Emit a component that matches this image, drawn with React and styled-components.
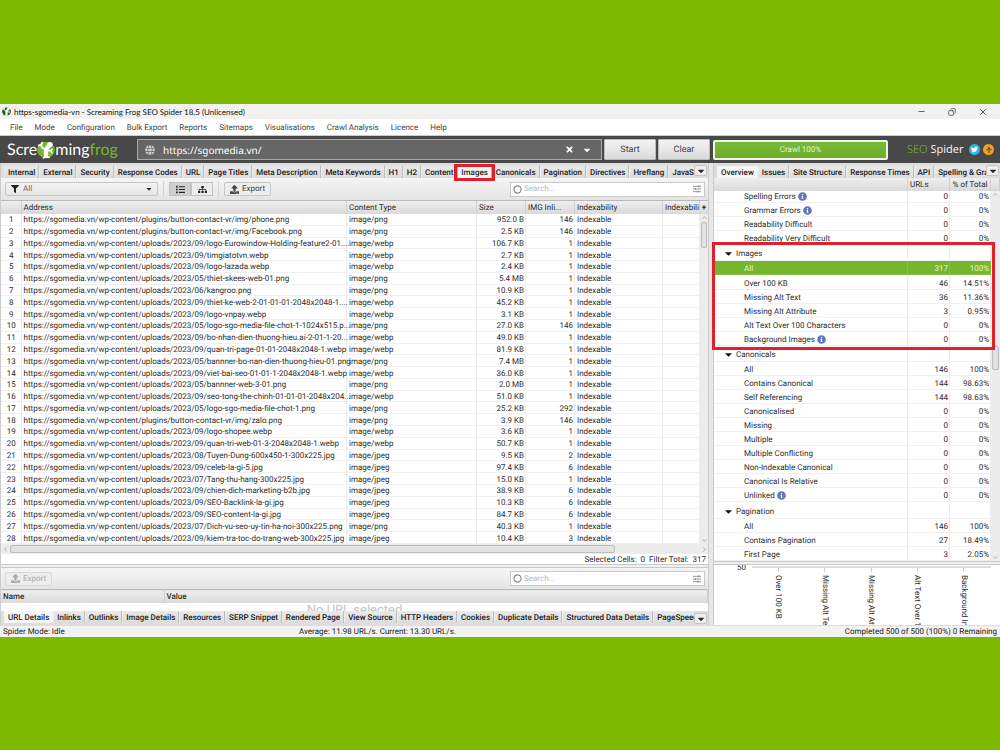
import React from 'react'
import styled, { createGlobalStyle, css } from 'styled-components'
import { FaFilter, FaList, FaSitemap, FaUpload, FaGlobe, FaTwitter, FaTimes, FaCaretDown, FaInfoCircle } from 'react-icons/fa'
import { Minus, Copy, X, ArrowUp, ChevronUp, ChevronDown, ChevronLeft, ChevronRight } from 'lucide-react'


const ui = `Roboto, "Liberation Sans", sans-serif`
const windowFont = `"Noto Sans", "Open Sans", sans-serif`

const GlobalStyle = createGlobalStyle`
	* { box-sizing: border-box; }

	body {
		margin: 0;
		background: #7db900;
		font-family: ${ui};
		font-size: 8px;
		line-height: 12px;
		text-rendering: geometricPrecision;
		color: #2c2c2c;
	}

	button, input, select {
		font: inherit;
		color: inherit;
		text-rendering: inherit;
		margin: 0;
		padding: 0;
		border: 0;
		background: none;
	}

	table {
		border-collapse: collapse;
		table-layout: fixed;
		width: 100%;
	}

	svg { display: block; flex: none; }
`

const Page = styled.div`
	display: flex;
	flex-direction: column;
	height: 100vh;
	min-height: 600px;
	padding: 104px 0 113px;
`

const Window = styled.main`
	flex: 1;
	min-height: 0;
	display: flex;
	flex-direction: column;
	background: #e6e6e6;
	overflow: hidden;
`

const TitleBar = styled.header`
	display: flex;
	align-items: center;
	gap: 3px;
	height: 15px;
	padding: 0 12px 0 2px;
	background: #f3f1f0;
	color: #111;
	font-family: Lato, ${windowFont};

	h1 {
		flex: 1;
		margin: 0;
		font-size: 8px;
		font-weight: 400;
	}
`

const WindowButton = styled.button`
	margin-left: 19px;
	color: #333;
`

const MenuBar = styled.nav`
	display: flex;
	gap: 12px;
	height: 17px;
	padding: 1px 10px 0;
	background: #fff;
	border-bottom: 1px solid #ccc;

	button { color: #444; }
`

const TopBar = styled.div`
	display: grid;
	grid-template-columns: minmax(0, 1fr) 287px;
	gap: 3px;
	height: 27px;
	padding: 3px 0;
	background: #484848;
`

const TopLeft = styled.div`
	display: flex;
	gap: 2px;
`

const TopRight = styled.div`
	display: flex;
	align-items: center;
`

const Logo = styled.div`
	display: flex;
	align-items: center;
	width: 135px;
	padding-left: 7px;
	font-family: Lato, ${windowFont};
	font-size: 16px;
	line-height: 20px;
	color: #fff;

	b {
		font-weight: 400;
		color: #76b82a;
	}
`

const UrlField = styled.label`
	flex: 1;
	display: flex;
	align-items: center;
	gap: 8px;
	padding: 0 9px 0 7px;
	background: #666;
	border: 1px solid #a8a8a8;
	color: #fff;

	input {
		flex: 1;
		min-width: 0;
		outline: 0;
		font-family: ${windowFont};
		font-size: 10px;
		line-height: 16px;
	}

	button { color: #fff; }
`

const BigButton = styled.button`
	width: 52px;
	border: 1px solid #bbb;
	border-radius: 1px;
	background: linear-gradient(#f4f4f4, #d9d9d9);
	color: #444;
	font-size: 9px;
`

const Progress = styled.div`
	width: 175px;
	height: 20px;
	border: 2px solid #eef5e6;
	border-radius: 2px;
	background: linear-gradient(#7ab83a, #6cae28);
	color: #e4f2d5;
	line-height: 16px;
	text-align: center;
`

const Product = styled.div`
	flex: 1;
	padding-left: 19px;
	color: #eee;
	font-family: ${windowFont};
	font-size: 11px;
	line-height: 16px;

	span { color: #76b82a; font-weight: 300; }
`

const RoundLink = styled.a`
	display: grid;
	place-items: center;
	width: 11px;
	height: 11px;
	margin-right: 3px;
	border-radius: 50%;
	background: ${props => props.$color};
	color: ${props => props.$ink};

	&:last-child { margin-right: 6px; }
`

const Panes = styled.div`
	flex: 1;
	min-height: 0;
	display: grid;
	grid-template-columns: minmax(0, 1fr) 287px;
	grid-template-rows: minmax(0, 1fr);
	gap: 4px;
`

const Pane = styled.section`
	display: flex;
	flex-direction: column;
	min-width: 0;
	min-height: 0;
	border-left: 1px solid #ccc;
	border-right: ${props => props.$edge ? '1px solid #ccc' : '0'};
`

const TabBar = styled.div`
	display: flex;
	align-items: ${props => props.$bottom ? 'flex-start' : 'flex-end'};
	height: ${props => props.$bottom ? 14 : 15}px;
	padding-left: 3px;
	background: #dedede;
`

const TabList = styled.div`
	flex: 1;
	min-width: 0;
	display: flex;
	overflow-x: clip;
`

const highlight = css`
	&::after {
		content: '';
		position: absolute;
		z-index: 2;
		inset: ${props => props.$inset};
		border: 3px solid #e0202a;
		pointer-events: none;
	}
`

const Tab = styled.button`
	position: relative;
	flex: none;
	height: 12px;
	padding: 0 3px;
	border-left: 1px solid #ececec;
	border-right: 1px solid #bdbdbd;
	background: linear-gradient(#e9e9e9, #dcdcdc);
	font-weight: 500;
	line-height: 13px;
	white-space: nowrap;
	color: #1c1c1c;

	${props => props.$active && css`
		background: #f6f6f6;
		border-color: #f0f0f0;
	`}
	${props => props.$inset && css`border-color: #9cc95e;`}
	${props => props.$inset && highlight}
`

const MoreTabs = styled.button`
	display: grid;
	place-items: center;
	align-self: center;
	width: 13px;
	height: 11px;
	margin-right: 1px;
	border: 1px solid #c4c4c4;
	border-radius: 2px;
	background: #eee;
`

const Toolbar = styled.div`
	display: flex;
	align-items: center;
	height: ${props => props.$short ? 21 : 22}px;
	padding: 0 3px 0 4px;
	background: linear-gradient(#f5f5f5, #e4e4e4);
`

const Filter = styled.label`
	display: flex;
	align-items: center;
	gap: 4px;
	width: 153px;
	height: 14px;
	padding: 0 4px 0 5px;
	border: 1px solid #c6c6c6;
	border-radius: 2px;
	background: linear-gradient(#f3f3f3, #e6e6e6);

	select {
		flex: 1;
		appearance: none;
		color: #666;
	}
`

const Divider = styled.span`
	width: 1px;
	height: 16px;
	margin: 0 5px;
	background: #d4d4d4;
`

const Toggle = styled.button`
	display: grid;
	place-items: center;
	width: 22px;
	height: 14px;
	border: 1px solid #c2c2c2;
	background: ${props => props.$on ? '#cfcfcf' : '#ececec'};
	color: #222;
`

const ExportButton = styled.button`
	display: flex;
	align-items: center;
	gap: 3px;
	height: 14px;
	padding: 0 5px;
	border: 1px solid #c6c6c6;
	border-radius: 2px;
	background: #ededed;
	color: #444;

	&:disabled { color: #aaa; border-color: #d8d8d8; }
`

const Search = styled.label`
	display: flex;
	align-items: center;
	gap: 2px;
	width: 195px;
	height: 15px;
	margin-left: auto;
	padding: 0 3px 0 2px;
	border: 1px solid #c8c8c8;
	background: #fff;
	color: #888;

	input {
		flex: 1;
		min-width: 0;
	}

	input::placeholder { color: #b8b8b8; opacity: 1; }
`

const TableArea = styled.div`
	flex: 1;
	min-height: 0;
	display: grid;
	grid-template-columns: minmax(0, 1fr) 8px;
	grid-template-rows: minmax(0, 1fr);
	border-top: 1px solid #b8b8b8;
`

const headCell = css`
	height: 13px;
	padding: 0 2px;
	background: linear-gradient(#efefef, #d9d9d9);
	border-right: 1px solid #cfcfcf;
	font-weight: 400;
	line-height: 13px;
	text-align: left;
	white-space: nowrap;
	overflow: hidden;
`

const bodyCell = css`
	padding: 1px 1px 0 2px;
	border-right: 1px solid #ececec;
	border-bottom: 1px solid #f0f0f0;
	line-height: 9px;
	white-space: nowrap;
`

const UrlTable = styled.table`
	height: 100%;
	background: #fff;

	th { ${headCell} }

	td { ${bodyCell} }

	td:first-child { text-align: center; }
	td:nth-child(4), td:nth-child(5) { text-align: right; }
`

const ScrollColumn = styled.div`
	display: flex;
	flex-direction: column;
`

const AddColumn = styled.button`
	height: 13px;
	background: linear-gradient(#efefef, #d9d9d9);
	line-height: 13px;
	font-weight: 700;
`

const Track = styled.div`
	flex: 1;
	display: grid;
	justify-items: center;
	align-items: center;
	background: #ececec;
	color: #888;
	${props => props.$across
		? `grid-template-columns: 8px 0 ${props.$size}fr ${props.$after}fr 8px; height: 10px; flex: none;`
		: `grid-template-rows: 7px ${props.$before}fr ${props.$size}fr ${props.$after}fr 7px;`}
`

const Thumb = styled.div`
	align-self: stretch;
	justify-self: stretch;
	margin: 1px;
	border: 1px solid #bcbcbc;
	border-radius: 2px;
	background: #e2e2e2;
	${props => props.$across ? 'grid-column: 3;' : 'grid-row: 3;'}
`

const End = styled.span`
	${props => props.$across ? 'grid-column: 5;' : 'grid-row: 5;'}
`

const Totals = styled.div`
	height: 10px;
	padding-right: 2px;
	background: #fff;
	line-height: 11px;
	text-align: right;
	white-space: pre;
`

const Splitter = styled.div`
	height: 4px;
	border: solid #c8c8c8;
	border-width: 1px 0;
	background: #f0f0f0;
`

const DetailTable = styled.table`
	border-top: 1px solid #b8b8b8;

	th { ${headCell} font-weight: 500; }
`

const NoSelection = styled.div`
	height: 8px;
	overflow: hidden;
	background: #fff;
	color: #c4c4c4;
	font-size: 13px;
	line-height: 15px;
	text-align: center;
`

const OverviewHead = styled.table`
	th { ${headCell} }
	th:nth-child(3) { text-align: center; }
`

const OverviewArea = styled.div`
	flex: 1;
	min-height: 0;
	display: grid;
	grid-template-columns: minmax(0, 1fr) 9px;
	grid-template-rows: minmax(0, 1fr);
`

/* the list is scrolled, so its first row sits partly under the header */
const OverviewScroll = styled.div`
	display: flex;
	flex-direction: column;
	justify-content: flex-end;
	min-height: 0;
	background: #fff;
	overflow-y: clip;
`

const OverviewTable = styled.table`
	flex: none;
	height: calc(100% + 2px);

	td {
		${bodyCell}
		padding-top: 2px;
		text-align: right;
	}
`

const Group = styled.tbody`
	position: relative;
	${props => props.$inset && highlight}
`

const OverviewRow = styled.tr`
	${props => props.$selected && css`
		background: #74b62c;
		color: #e6f4d6;
		td { border-color: #85c043; }
	`}

	td:first-child { padding-left: ${props => props.$group ? 9 : 30}px; }
`

const Label = styled.span`
	display: flex;
	align-items: center;
	gap: 2px;

	svg { color: #5f78ba; }
	svg.caret { color: #111; }
`

const Chart = styled.div`
	display: grid;
	grid-template-columns: 34px minmax(0, 1fr);
	gap: 4px;
	height: 60px;
	padding-right: 9px;
	background: #fff;
	overflow: hidden;
	line-height: 6px;

	> span { text-align: right; padding-right: 2px; }
`

const Axis = styled.div`
	display: flex;
	height: 59px;
	margin-top: 1px;
	padding: 0 4px 0 3px;
	border-top: 2px solid #dcdcdc;
`

const Tick = styled.div`
	flex: 1;
	display: flex;
	flex-direction: column;
	align-items: center;

	&::before {
		content: '';
		flex: none;
		width: 1px;
		height: 4px;
		margin-bottom: 3px;
		background: #ccc;
	}

	span {
		flex: none;
		writing-mode: vertical-rl;
		white-space: nowrap;
		line-height: 10px;
	}
`

const StatusBar = styled.footer`
	display: grid;
	grid-template-columns: 296px 1fr auto;
	height: 12px;
	padding: 0 3px;
	background: #f2f2f2;
	border-top: 1px solid #ddd;
	color: #222;
	line-height: 11px;
`


const mainTabs = ['Internal', 'External', 'Security', 'Response Codes', 'URL', 'Page Titles', 'Meta Description', 'Meta Keywords', 'H1', 'H2', 'Content', 'Images', 'Canonicals', 'Pagination', 'Directives', 'Hreflang', 'JavaScript']
const detailTabs = ['URL Details', 'Inlinks', 'Outlinks', 'Image Details', 'Resources', 'SERP Snippet', 'Rendered Page', 'View Source', 'HTTP Headers', 'Cookies', 'Duplicate Details', 'Structured Data Details', 'PageSpeed Details']
const sideTabs = ['Overview', 'Issues', 'Site Structure', 'Response Times', 'API', 'Spelling & Grammar']
const menus = ['File', 'Mode', 'Configuration', 'Bulk Export', 'Reports', 'Sitemaps', 'Visualisations', 'Crawl Analysis', 'Licence', 'Help']

const base = 'https://sgomedia.vn/wp-content/'

const rows = [
	['plugins/button-contact-vr/img/phone.png', 'png', '952.0 B', 146],
	['plugins/button-contact-vr/img/Facebook.png', 'png', '2.5 KB', 146],
	['uploads/2023/09/logo-Eurowindow-Holding-feature2-01....', 'webp', '106.7 KB', 1],
	['uploads/2023/09/timgiatotvn.webp', 'webp', '2.7 KB', 1],
	['uploads/2023/09/logo-lazada.webp', 'webp', '2.4 KB', 1],
	['uploads/2023/05/thiet-skees-web-01.png', 'png', '5.4 MB', 1],
	['uploads/2023/06/kangroo.png', 'png', '10.9 KB', 1],
	['uploads/2023/09/thiet-ke-web-2-01-01-01-2048x2048-1....', 'webp', '45.2 KB', 1],
	['uploads/2023/09/logo-vnpay.webp', 'webp', '3.1 KB', 1],
	['uploads/2023/05/logo-sgo-media-file-chot-1-1024x515.p...', 'png', '27.0 KB', 146],
	['uploads/2023/09/bo-nhan-dien-thuong-hieu.ai-2-01-1-20...', 'webp', '49.0 KB', 1],
	['uploads/2023/09/quan-tri-page-01-01-2048x2048-1.webp', 'webp', '81.9 KB', 1],
	['uploads/2023/05/bannner-bo-nan-dien-thuong-hieu-01.png', 'png', '7.4 MB', 1],
	['uploads/2023/09/viet-bai-seo-01-01-1-2048x2048-1.webp', 'webp', '36.0 KB', 1],
	['uploads/2023/05/bannner-web-3-01.png', 'png', '2.0 MB', 1],
	['uploads/2023/09/seo-tong-the-chinh-01-01-01-2048x204...', 'webp', '51.0 KB', 1],
	['uploads/2023/05/logo-sgo-media-file-chot-1.png', 'png', '25.2 KB', 292],
	['plugins/button-contact-vr/img/zalo.png', 'png', '3.9 KB', 146],
	['uploads/2023/09/logo-shopee.webp', 'webp', '3.6 KB', 1],
	['uploads/2023/09/quan-tri-web-01-3-2048x2048-1.webp', 'webp', '50.7 KB', 1],
	['uploads/2023/08/Tuyen-Dung-600x450-1-300x225.jpg', 'jpeg', '9.5 KB', 2],
	['uploads/2023/09/celeb-la-gi-5.jpg', 'jpeg', '97.4 KB', 6],
	['uploads/2023/07/Tang-thu-hang-300x225.jpg', 'jpeg', '15.0 KB', 1],
	['uploads/2023/09/chien-dich-marketing-b2b.jpg', 'jpeg', '38.9 KB', 6],
	['uploads/2023/09/SEO-Backlink-la-gi.jpg', 'jpeg', '10.3 KB', 6],
	['uploads/2023/09/SEO-content-la-gi.jpg', 'jpeg', '84.7 KB', 6],
	['uploads/2023/07/Dich-vu-seo-uy-tin-ha-noi-300x225.png', 'png', '40.3 KB', 1],
	['uploads/2023/09/kiem-tra-toc-do-trang-web-300x225.jpg', 'jpeg', '10.4 KB', 3]
]

const groups = [
	{
		items: [
			['Spelling Errors', 0, '0%', true],
			['Grammar Errors', 0, '0%', true],
			['Readability Difficult', 0, '0%'],
			['Readability Very Difficult', 0, '0%']
		]
	},
	{
		name: 'Images',
		items: [
			['All', 317, '100%'],
			['Over 100 KB', 46, '14.51%'],
			['Missing Alt Text', 36, '11.36%'],
			['Missing Alt Attribute', 3, '0.95%'],
			['Alt Text Over 100 Characters', 0, '0%'],
			['Background Images', 0, '0%', true]
		]
	},
	{
		name: 'Canonicals',
		items: [
			['All', 146, '100%'],
			['Contains Canonical', 144, '98.63%'],
			['Self Referencing', 144, '98.63%'],
			['Canonicalised', 0, '0%'],
			['Missing', 0, '0%'],
			['Multiple', 0, '0%'],
			['Multiple Conflicting', 0, '0%'],
			['Non-Indexable Canonical', 0, '0%'],
			['Canonical Is Relative', 0, '0%'],
			['Unlinked', 0, '0%', true]
		]
	},
	{
		name: 'Pagination',
		items: [
			['All', 146, '100%'],
			['Contains Pagination', 27, '18.49%'],
			['First Page', 3, '2.05%']
		]
	}
]

const ticks = ['Over 100 KB', 'Missing Alt Text', 'Missing Alt Attribute', 'Alt Text Over 100 Characters', 'Background Images']


const Frog = ({ size, back, ink }) => (
	<svg width={size} height={size} viewBox="0 0 18 18" aria-hidden="true">
		<ellipse cx="9" cy="9" rx="8.8" ry="8.2" fill={back} />
		<g fill="none" stroke={ink} strokeLinecap="round" strokeLinejoin="round">
			<path d="M12 4.6 L9 8.5 L9 14" strokeWidth="4.4" />
			<path d="M8 8 L5.5 7 L4 4 M4 4 L1.8 4.4 M4 4 L5.2 1.6" strokeWidth="1.8" />
			<path d="M11 9.5 L14 10 L15 8.4 M14 10 L15 11.8" strokeWidth="1.5" />
			<path d="M9 13 L9.4 16.4 M9.2 15.4 L12 16.4 M9.2 15.4 L6.6 16.8" strokeWidth="1.8" />
		</g>
		<circle cx="13" cy="3.6" r="2.7" fill={ink} />
	</svg>
)

const Sliders = () => (
	<svg width="8" height="8" viewBox="0 0 9 9" stroke="#888" strokeWidth="1" aria-hidden="true">
		<path d="M0 1.5 H9 M0 4.5 H9 M0 7.5 H9" />
		<path d="M6.5 0.3 V2.7 M2.5 3.3 V5.7 M5.5 6.3 V8.7" />
	</svg>
)

const SearchBox = ({ label }) => (
	<Search>
		<svg width="9" height="9" viewBox="0 0 9 9" aria-hidden="true">
			<circle cx="4.5" cy="4.5" r="3.6" fill="none" stroke="#888" strokeWidth="1.2" />
		</svg>
		<input type="text" placeholder="Search..." aria-label={label} />
		<Sliders />
	</Search>
)

const Tabs = ({ items, active, marked, bottom }) => (
	<TabBar $bottom={bottom}>
		<TabList role="tablist">
			{ items.map(name =>
				<Tab
					key={ name }
					role="tab"
					aria-selected={ name === active }
					$active={ name === active }
					$inset={ name === marked ? '-2px -4px -3px' : null }
				>{ name }</Tab>
			)}
		</TabList>
		<MoreTabs aria-label="More tabs"><FaCaretDown size={10} /></MoreTabs>
	</TabBar>
)

const VerticalScroll = ({ before, size, after }) => (
	<Track $before={before} $size={size} $after={after}>
		<ChevronUp size={7} />
		<Thumb />
		<End><ChevronDown size={7} /></End>
	</Track>
)

const UrlList = () => (
	<>
		<TableArea>
			<UrlTable>
				<colgroup>
					<col style={{ width: 20 }} />
					<col />
					<col style={{ width: 130 }} />
					<col style={{ width: 49 }} />
					<col style={{ width: 49 }} />
					<col style={{ width: 88 }} />
					<col style={{ width: 37 }} />
				</colgroup>
				<thead>
					<tr>
						<th></th>
						<th>Address</th>
						<th>Content Type</th>
						<th>Size</th>
						<th>IMG Inli...</th>
						<th>Indexability</th>
						<th>Indexability</th>
					</tr>
				</thead>
				<tbody>
					{ rows.map(([path, type, size, links], i) =>
						<tr key={ path }>
							<td>{ i + 1 }</td>
							<td>{ base + path }</td>
							<td>image/{ type }</td>
							<td>{ size }</td>
							<td>{ links }</td>
							<td>Indexable</td>
							<td></td>
						</tr>
					)}
				</tbody>
			</UrlTable>
			<ScrollColumn>
				<AddColumn aria-label="Add column">+</AddColumn>
				<VerticalScroll before={0} size={28} after={287} />
			</ScrollColumn>
		</TableArea>
		<Track $across $size={603} $after={84}>
			<ChevronLeft size={7} />
			<Thumb $across />
			<End $across><ChevronRight size={7} /></End>
		</Track>
		<Totals>{'Selected Cells:  0  Filter Total:  317'}</Totals>
	</>
)

const Overview = () => {
	const columns = <colgroup>
		<col />
		<col style={{ width: 42 }} />
		<col style={{ width: 41 }} />
	</colgroup>

	return (
		<>
			<OverviewHead>
				<colgroup>
					<col />
					<col style={{ width: 42 }} />
					<col style={{ width: 41 }} />
					<col style={{ width: 9 }} />
				</colgroup>
				<thead>
					<tr><th></th><th>URLs</th><th>% of Total</th><th></th></tr>
				</thead>
			</OverviewHead>
			<OverviewArea>
				<OverviewScroll>
					<OverviewTable>
						{ columns }
						{ groups.map(group =>
							<Group key={ group.name || 'Content' } $inset={ group.name === 'Images' ? '-3px -4px -4px -2px' : null }>
								{ group.name
									? <OverviewRow $group>
										<td><Label><FaCaretDown className="caret" size={11} />{ group.name }</Label></td>
										<td></td>
										<td></td>
									</OverviewRow>
								: null }
								{ group.items.map(([name, urls, share, info]) =>
									<OverviewRow key={ name } $selected={ group.name === 'Images' && name === 'All' }>
										<td><Label>{ name }{ info ? <FaInfoCircle size={9} /> : null }</Label></td>
										<td>{ urls }</td>
										<td>{ share }</td>
									</OverviewRow>
								)}
							</Group>
						)}
					</OverviewTable>
				</OverviewScroll>
				<VerticalScroll before={147} size={26} after={183} />
			</OverviewArea>
		</>
	)
}

const App = () => (
	<Page>
		<GlobalStyle />
		<Window>
			<TitleBar>
				<Frog size={9} back="#2f5a1c" ink="#fff" />
				<h1>https-sgomedia-vn - Screaming Frog SEO Spider 18.5 (Unlicensed)</h1>
				<WindowButton aria-label="Minimise"><Minus size={9} /></WindowButton>
				<WindowButton aria-label="Restore"><Copy size={8} style={{ transform: 'scaleX(-1)' }} /></WindowButton>
				<WindowButton aria-label="Close"><X size={10} /></WindowButton>
			</TitleBar>
			<MenuBar>
				{ menus.map(name => <button key={ name }>{ name }</button>) }
			</MenuBar>
			<TopBar>
				<TopLeft>
					<Logo>Scre<Frog size={18} back="#76b82a" ink="#fff" />ming<b>frog</b></Logo>
					<UrlField>
						<FaGlobe size={10} color="#ccc" />
						<input type="text" defaultValue="https://sgomedia.vn/" aria-label="URL to spider" />
						<button aria-label="Clear URL"><FaTimes size={9} /></button>
						<button aria-label="Recent URLs"><FaCaretDown size={10} /></button>
					</UrlField>
					<BigButton>Start</BigButton>
					<BigButton>Clear</BigButton>
				</TopLeft>
				<TopRight>
					<Progress>Crawl 100%</Progress>
					<Product><span>SEO</span> Spider</Product>
					<RoundLink href="#twitter" aria-label="Twitter" $color="#35b2e6" $ink="#fff"><FaTwitter size={7} /></RoundLink>
					<RoundLink href="#update" aria-label="Update" $color="#f0a01e" $ink="#333"><ArrowUp size={8} strokeWidth={3} /></RoundLink>
				</TopRight>
			</TopBar>
			<Panes>
				<Pane $edge>
					<Tabs items={mainTabs} active="Images" marked="Images" />
					<Toolbar>
						<Filter>
							<FaFilter size={8} color="#222" />
							<select aria-label="Filter"><option>All</option></select>
							<FaCaretDown size={8} />
						</Filter>
						<Divider />
						<Toggle $on aria-label="List view"><FaList size={9} /></Toggle>
						<Toggle aria-label="Tree view"><FaSitemap size={9} /></Toggle>
						<Divider />
						<ExportButton><FaUpload size={9} />Export</ExportButton>
						<SearchBox label="Search URLs" />
					</Toolbar>
					<UrlList />
					<Splitter />
					<Toolbar $short>
						<ExportButton disabled><FaUpload size={9} />Export</ExportButton>
						<SearchBox label="Search details" />
					</Toolbar>
					<DetailTable>
						<colgroup>
							<col style={{ width: 163 }} />
							<col />
						</colgroup>
						<thead>
							<tr><th>Name</th><th>Value</th></tr>
						</thead>
					</DetailTable>
					<NoSelection>No URL selected</NoSelection>
					<Tabs items={detailTabs} active="URL Details" bottom />
				</Pane>
				<Pane>
					<Tabs items={sideTabs} active="Overview" />
					<Overview />
					<Splitter />
					<Chart>
						<span>50</span>
						<Axis>
							{ ticks.map(name => <Tick key={ name }><span>{ name }</span></Tick>) }
						</Axis>
					</Chart>
				</Pane>
			</Panes>
			<StatusBar>
				<span>Spider Mode: Idle</span>
				<span>Average: 11.98 URL/s. Current: 13.30 URL/s.</span>
				<span>Completed 500 of 500 (100%) 0 Remaining</span>
			</StatusBar>
		</Window>
	</Page>
)

export default App
